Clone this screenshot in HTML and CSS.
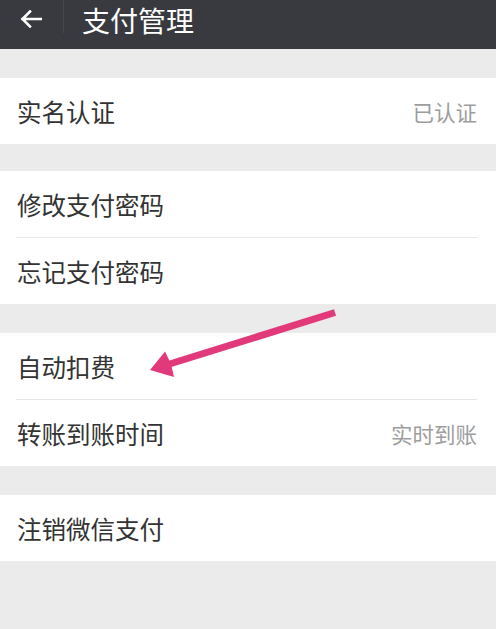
FILE: index.html
```html
<!DOCTYPE html>
<html lang="zh-CN">
<head>
<meta charset="utf-8">
<title>支付管理</title>
<link rel="stylesheet" href="styles.css">
</head>
<body>
<div class="page">
  <header class="topbar">
    <div class="back">
      <svg width="22" height="18" viewBox="0 0 22 18" aria-hidden="true">
        <path d="M21 9H2.5M10 1.5L2.5 9L10 16.5" fill="none" stroke="#ffffff" stroke-width="2.6" stroke-linecap="square" stroke-linejoin="miter"/>
      </svg>
    </div>
    <div class="sep"></div>
    <h1 class="title">支付管理</h1>
  </header>

  <section class="group g1">
    <div class="row"><span class="label">实名认证</span><span class="value">已认证</span></div>
  </section>

  <section class="group g2">
    <div class="row"><span class="label">修改支付密码</span></div>
    <div class="row divided"><span class="label">忘记支付密码</span></div>
  </section>

  <section class="group g3">
    <div class="row"><span class="label">自动扣费</span></div>
    <div class="row divided"><span class="label">转账到账时间</span><span class="value">实时到账</span></div>
  </section>

  <section class="group g4">
    <div class="row"><span class="label">注销微信支付</span></div>
  </section>

  <svg class="annotation" width="496" height="629" viewBox="0 0 496 629" aria-hidden="true">
    <line x1="335" y1="312.5" x2="168" y2="364.5" stroke="#e2397b" stroke-width="7" stroke-linecap="butt"/>
    <polygon points="150,370 165,351.5 171,364 174,377" fill="#e2397b"/>
  </svg>
</div>
</body>
</html>
```

FILE: styles.css
```css
html, body {
  margin: 0;
  padding: 0;
  background: #ebebeb;
}

.page {
  position: relative;
  width: 496px;
  height: 629px;
  overflow: hidden;
  font-family: "Noto Sans CJK SC", "Noto Sans", sans-serif;
}

.topbar {
  height: 49px;
  background: #393a3f;
  display: flex;
  align-items: flex-start;
}

.back {
  width: 22px;
  height: 18px;
  margin: 10px 0 0 20px;
  display: flex;
}

.sep {
  width: 1px;
  height: 33px;
  background: #46474c;
  margin-left: 21px;
}

.title {
  margin: 0 0 0 18px;
  font-size: 28px;
  font-weight: 400;
  line-height: 40px;
  color: #ffffff;
}

.group {
  background: #ffffff;
}

.g1 { margin-top: 29px; }
.g2 { margin-top: 27px; }
.g3 { margin-top: 29px; }
.g4 { margin-top: 29px; }

.row {
  position: relative;
  height: 66px;
  display: flex;
  align-items: center;
  justify-content: space-between;
  padding: 0 19px 0 17px;
}

.row.divided {
  border-top: 1px solid transparent;
}

.row.divided::before {
  content: "";
  position: absolute;
  top: -1px;
  left: 16px;
  right: 19px;
  height: 1px;
  background: #e6e6e6;
}

.label {
  font-size: 24.5px;
  color: #333333;
}

.value {
  font-size: 21.5px;
  color: #9d9d9d;
}

.annotation {
  position: absolute;
  top: 0;
  left: 0;
  pointer-events: none;
}
```
